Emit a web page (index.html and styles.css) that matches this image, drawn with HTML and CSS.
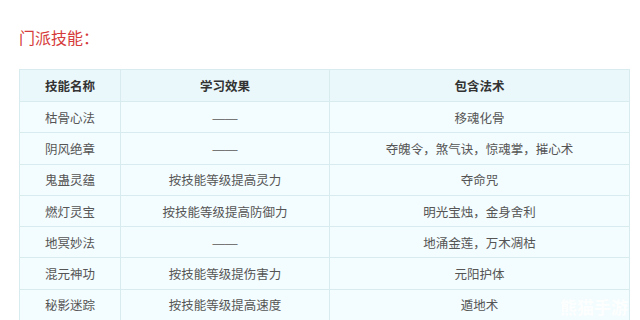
FILE: index.html
```html
<!DOCTYPE html>
<html lang="zh">
<head>
<meta charset="utf-8">
<link rel="stylesheet" href="styles.css">
</head>
<body>
<div class="page">
  <h2 class="title">门派技能：</h2>
  <div class="wrap">
    <table class="skills">
      <thead>
        <tr><th class="c1">技能名称</th><th class="c2">学习效果</th><th class="c3">包含法术</th></tr>
      </thead>
      <tbody>
        <tr><td>枯骨心法</td><td><span class="dash">——</span></td><td>移魂化骨</td></tr>
        <tr><td>阴风绝章</td><td><span class="dash">——</span></td><td>夺魄令，煞气诀，惊魂掌，摧心术</td></tr>
        <tr><td>鬼蛊灵蕴</td><td>按技能等级提高灵力</td><td>夺命咒</td></tr>
        <tr><td>燃灯灵宝</td><td>按技能等级提高防御力</td><td>明光宝烛，金身舍利</td></tr>
        <tr><td>地冥妙法</td><td><span class="dash">——</span></td><td>地涌金莲，万木凋枯</td></tr>
        <tr><td>混元神功</td><td>按技能等级提伤害力</td><td>元阳护体</td></tr>
        <tr><td>秘影迷踪</td><td>按技能等级提高速度</td><td>遁地术</td></tr>
      </tbody>
    </table>
    <span class="mark">熊猫手游</span>
  </div>
</div>
</body>
</html>
```
FILE: styles.css
```css
html, body {
  margin: 0;
  padding: 0;
  background: #fff;
}
.page {
  width: 640px;
  height: 320px;
  overflow: hidden;
  padding: 0 10px 0 19px;
  box-sizing: border-box;
  font-family: "Noto Sans CJK SC", "Noto Sans", sans-serif;
}
.title {
  margin: 0;
  padding-top: 27px;
  height: 69px;
  box-sizing: border-box;
  font-size: 16px;
  font-weight: normal;
  line-height: 20px;
  color: #d63b3b;
}
.wrap {
  position: relative;
}
.skills {
  width: 611px;
  border-collapse: collapse;
  background: #f3fcfe;
  font-size: 12.5px;
  color: #555;
}
.skills th, .skills td {
  border: 1px solid #d8ecef;
  height: 30.3px;
  padding: 0;
  text-align: center;
  vertical-align: middle;
}
.skills th {
  background: #eaf8fb;
  color: #333;
  font-weight: bold;
  height: 31px;
}
.c1 { width: 100px; }
.c2 { width: 208px; }
.dash {
  font-family: "Liberation Sans", sans-serif;
  color: #777;
}
.mark {
  position: absolute;
  right: 2px;
  bottom: 2px;
  color: rgba(255,255,255,0.9);
  font-size: 17px;
  font-weight: bold;
}
```
